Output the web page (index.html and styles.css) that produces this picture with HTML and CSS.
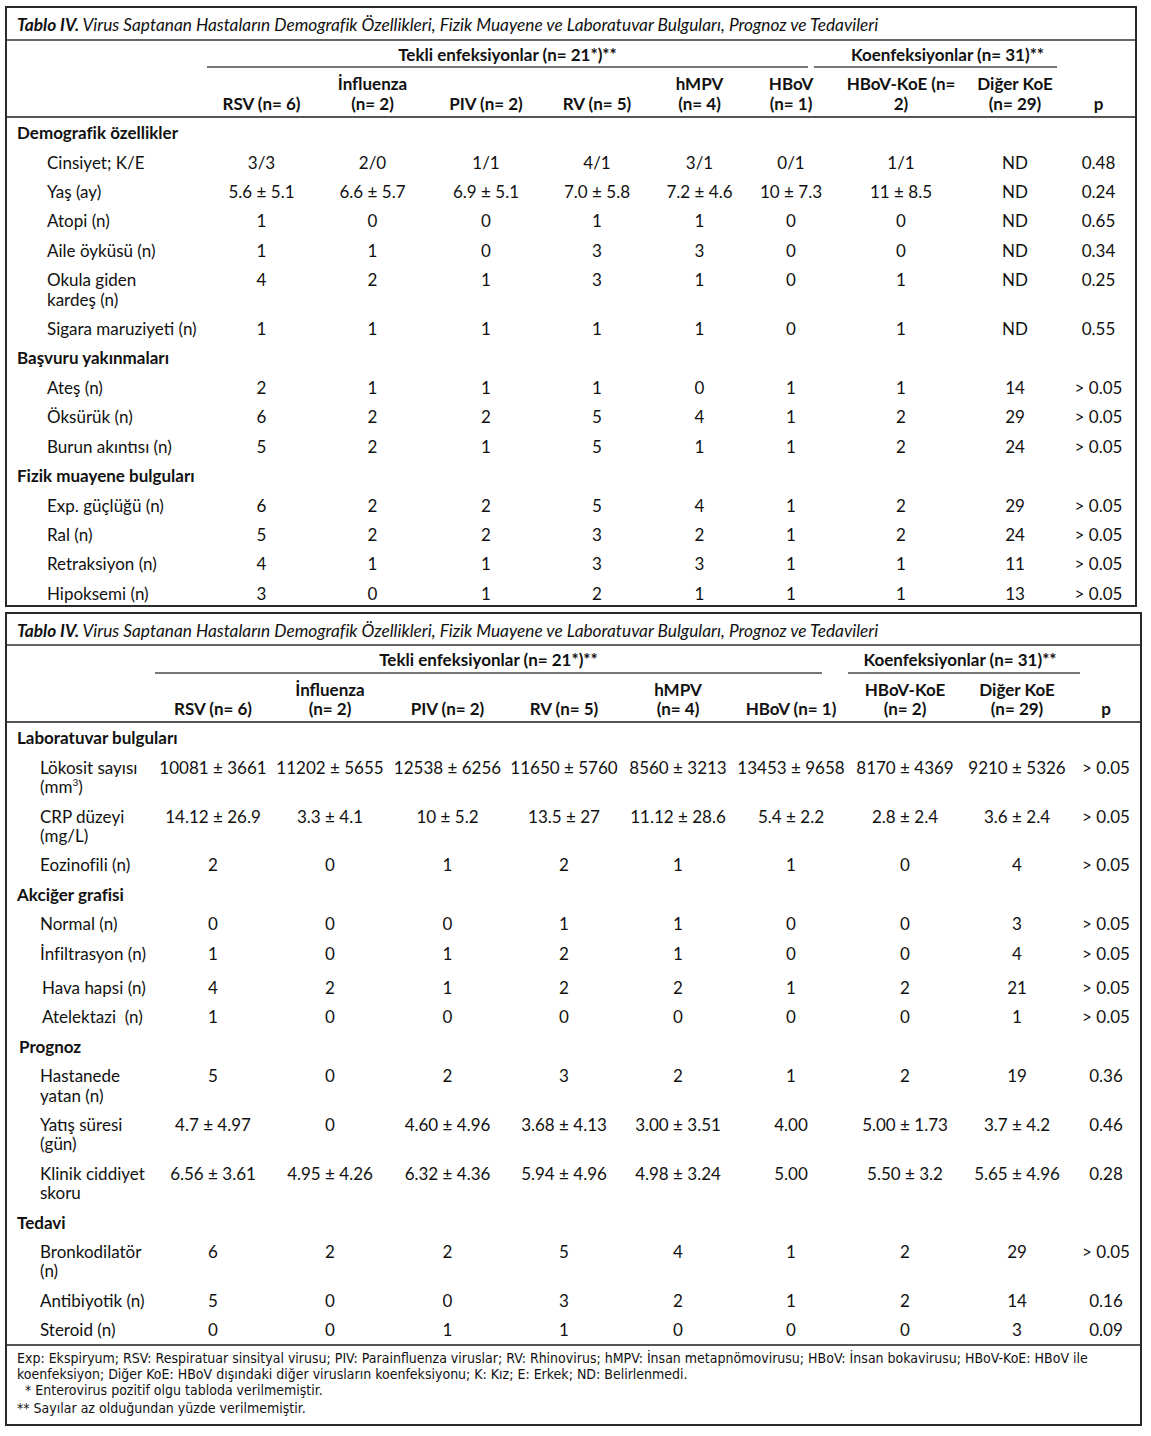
FILE: index.html
```html
<!DOCTYPE html>
<html lang="tr">
<head>
<meta charset="utf-8">
<title>Tablo IV</title>
<link rel="stylesheet" href="styles.css">
</head>
<body>
<div class="page">

<section class="box box-a">
  <div class="caption"><b>Tablo IV.</b> Virus Saptanan Hastaların Demografik Özellikleri, Fizik Muayene ve Laboratuvar Bulguları, Prognoz ve Tedavileri</div>
  <table class="tbl tbl-a">
    <colgroup>
      <col class="a-label"><col class="a-rsv"><col class="a-inf"><col class="a-piv"><col class="a-rv"><col class="a-hmpv"><col class="a-hbov"><col class="a-koe"><col class="a-diger"><col class="a-p">
    </colgroup>
    <thead>
      <tr class="grp-row">
        <th></th>
        <th colspan="6"><div class="grp grp-a-tekli">Tekli enfeksiyonlar (n= 21*)**</div></th>
        <th colspan="2"><div class="grp grp-a-koe">Koenfeksiyonlar (n= 31)**</div></th>
        <th></th>
      </tr>
      <tr class="col-row">
        <th></th>
        <th>RSV (n= 6)</th>
        <th>İnfluenza<br>(n= 2)</th>
        <th>PIV (n= 2)</th>
        <th>RV (n= 5)</th>
        <th>hMPV<br>(n= 4)</th>
        <th>HBoV<br>(n= 1)</th>
        <th>HBoV-KoE (n=<br>2)</th>
        <th>Diğer KoE<br>(n= 29)</th>
        <th>p</th>
      </tr>
    </thead>
    <tbody>
      <tr><td class="sec" colspan="10">Demografik özellikler</td></tr>
      <tr><td class="lbl">Cinsiyet; K/E</td><td>3/3</td><td>2/0</td><td>1/1</td><td>4/1</td><td>3/1</td><td>0/1</td><td>1/1</td><td>ND</td><td>0.48</td></tr>
      <tr><td class="lbl">Yaş (ay)</td><td>5.6 ± 5.1</td><td>6.6 ± 5.7</td><td>6.9 ± 5.1</td><td>7.0 ± 5.8</td><td>7.2 ± 4.6</td><td>10 ± 7.3</td><td>11 ± 8.5</td><td>ND</td><td>0.24</td></tr>
      <tr><td class="lbl">Atopi (n)</td><td>1</td><td>0</td><td>0</td><td>1</td><td>1</td><td>0</td><td>0</td><td>ND</td><td>0.65</td></tr>
      <tr><td class="lbl">Aile öyküsü (n)</td><td>1</td><td>1</td><td>0</td><td>3</td><td>3</td><td>0</td><td>0</td><td>ND</td><td>0.34</td></tr>
      <tr><td class="lbl">Okula giden<br>kardeş (n)</td><td>4</td><td>2</td><td>1</td><td>3</td><td>1</td><td>0</td><td>1</td><td>ND</td><td>0.25</td></tr>
      <tr><td class="lbl">Sigara maruziyeti (n)</td><td>1</td><td>1</td><td>1</td><td>1</td><td>1</td><td>0</td><td>1</td><td>ND</td><td>0.55</td></tr>
      <tr><td class="sec" colspan="10">Başvuru yakınmaları</td></tr>
      <tr><td class="lbl">Ateş (n)</td><td>2</td><td>1</td><td>1</td><td>1</td><td>0</td><td>1</td><td>1</td><td>14</td><td>&gt; 0.05</td></tr>
      <tr><td class="lbl">Öksürük (n)</td><td>6</td><td>2</td><td>2</td><td>5</td><td>4</td><td>1</td><td>2</td><td>29</td><td>&gt; 0.05</td></tr>
      <tr><td class="lbl">Burun akıntısı (n)</td><td>5</td><td>2</td><td>1</td><td>5</td><td>1</td><td>1</td><td>2</td><td>24</td><td>&gt; 0.05</td></tr>
      <tr><td class="sec" colspan="10">Fizik muayene bulguları</td></tr>
      <tr><td class="lbl">Exp. güçlüğü (n)</td><td>6</td><td>2</td><td>2</td><td>5</td><td>4</td><td>1</td><td>2</td><td>29</td><td>&gt; 0.05</td></tr>
      <tr><td class="lbl">Ral (n)</td><td>5</td><td>2</td><td>2</td><td>3</td><td>2</td><td>1</td><td>2</td><td>24</td><td>&gt; 0.05</td></tr>
      <tr><td class="lbl">Retraksiyon (n)</td><td>4</td><td>1</td><td>1</td><td>3</td><td>3</td><td>1</td><td>1</td><td>11</td><td>&gt; 0.05</td></tr>
      <tr class="last"><td class="lbl">Hipoksemi (n)</td><td>3</td><td>0</td><td>1</td><td>2</td><td>1</td><td>1</td><td>1</td><td>13</td><td>&gt; 0.05</td></tr>
    </tbody>
  </table>
</section>

<section class="box box-b">
  <div class="caption"><b>Tablo IV.</b> Virus Saptanan Hastaların Demografik Özellikleri, Fizik Muayene ve Laboratuvar Bulguları, Prognoz ve Tedavileri</div>
  <table class="tbl tbl-b">
    <colgroup>
      <col class="b-label"><col class="b-rsv"><col class="b-inf"><col class="b-piv"><col class="b-rv"><col class="b-hmpv"><col class="b-hbov"><col class="b-koe"><col class="b-diger"><col class="b-p">
    </colgroup>
    <thead>
      <tr class="grp-row">
        <th></th>
        <th colspan="6"><div class="grp grp-b-tekli">Tekli enfeksiyonlar (n= 21*)**</div></th>
        <th colspan="2"><div class="grp grp-b-koe">Koenfeksiyonlar (n= 31)**</div></th>
        <th></th>
      </tr>
      <tr class="col-row">
        <th></th>
        <th>RSV (n= 6)</th>
        <th>İnfluenza<br>(n= 2)</th>
        <th>PIV (n= 2)</th>
        <th>RV (n= 5)</th>
        <th>hMPV<br>(n= 4)</th>
        <th>HBoV (n= 1)</th>
        <th>HBoV-KoE<br>(n= 2)</th>
        <th>Diğer KoE<br>(n= 29)</th>
        <th>p</th>
      </tr>
    </thead>
    <tbody>
      <tr><td class="sec" colspan="10">Laboratuvar bulguları</td></tr>
      <tr><td class="lbl">Lökosit sayısı<br>(mm<sup>3</sup>)</td><td>10081 ± 3661</td><td>11202 ± 5655</td><td>12538 ± 6256</td><td>11650 ± 5760</td><td>8560 ± 3213</td><td>13453 ± 9658</td><td>8170 ± 4369</td><td>9210 ± 5326</td><td>&gt; 0.05</td></tr>
      <tr><td class="lbl">CRP düzeyi<br>(mg/L)</td><td>14.12 ± 26.9</td><td>3.3 ± 4.1</td><td>10 ± 5.2</td><td>13.5 ± 27</td><td>11.12 ± 28.6</td><td>5.4 ± 2.2</td><td>2.8 ± 2.4</td><td>3.6 ± 2.4</td><td>&gt; 0.05</td></tr>
      <tr><td class="lbl">Eozinofili (n)</td><td>2</td><td>0</td><td>1</td><td>2</td><td>1</td><td>1</td><td>0</td><td>4</td><td>&gt; 0.05</td></tr>
      <tr><td class="sec" colspan="10">Akciğer grafisi</td></tr>
      <tr><td class="lbl">Normal (n)</td><td>0</td><td>0</td><td>0</td><td>1</td><td>1</td><td>0</td><td>0</td><td>3</td><td>&gt; 0.05</td></tr>
      <tr><td class="lbl">İnfiltrasyon (n)</td><td>1</td><td>0</td><td>1</td><td>2</td><td>1</td><td>0</td><td>0</td><td>4</td><td>&gt; 0.05</td></tr>
      <tr class="tall"><td class="lbl lbl-shift">Hava hapsi (n)</td><td>4</td><td>2</td><td>1</td><td>2</td><td>2</td><td>1</td><td>2</td><td>21</td><td>&gt; 0.05</td></tr>
      <tr><td class="lbl lbl-shift">Atelektazi&nbsp; (n)</td><td>1</td><td>0</td><td>0</td><td>0</td><td>0</td><td>0</td><td>0</td><td>1</td><td>&gt; 0.05</td></tr>
      <tr><td class="sec sec-shift" colspan="10">Prognoz</td></tr>
      <tr><td class="lbl">Hastanede<br>yatan (n)</td><td>5</td><td>0</td><td>2</td><td>3</td><td>2</td><td>1</td><td>2</td><td>19</td><td>0.36</td></tr>
      <tr><td class="lbl">Yatış süresi<br>(gün)</td><td>4.7 ± 4.97</td><td>0</td><td>4.60 ± 4.96</td><td>3.68 ± 4.13</td><td>3.00 ± 3.51</td><td>4.00</td><td>5.00 ± 1.73</td><td>3.7 ± 4.2</td><td>0.46</td></tr>
      <tr><td class="lbl">Klinik ciddiyet<br>skoru</td><td>6.56 ± 3.61</td><td>4.95 ± 4.26</td><td>6.32 ± 4.36</td><td>5.94 ± 4.96</td><td>4.98 ± 3.24</td><td>5.00</td><td>5.50 ± 3.2</td><td>5.65 ± 4.96</td><td>0.28</td></tr>
      <tr><td class="sec" colspan="10">Tedavi</td></tr>
      <tr><td class="lbl">Bronkodilatör<br>(n)</td><td>6</td><td>2</td><td>2</td><td>5</td><td>4</td><td>1</td><td>2</td><td>29</td><td>&gt; 0.05</td></tr>
      <tr><td class="lbl">Antibiyotik (n)</td><td>5</td><td>0</td><td>0</td><td>3</td><td>2</td><td>1</td><td>2</td><td>14</td><td>0.16</td></tr>
      <tr class="last-ruled"><td class="lbl">Steroid (n)</td><td>0</td><td>0</td><td>1</td><td>1</td><td>0</td><td>0</td><td>0</td><td>3</td><td>0.09</td></tr>
    </tbody>
  </table>
  <div class="notes">
    <p class="note">Exp: Ekspiryum; RSV: Respiratuar sinsityal virusu; PIV: Parainfluenza viruslar; RV: Rhinovirus; hMPV: İnsan metapnömovirusu; HBoV: İnsan bokavirusu; HBoV-KoE: HBoV ile<br>koenfeksiyon; Diğer KoE: HBoV dışındaki diğer virusların koenfeksiyonu; K: Kız; E: Erkek; ND: Belirlenmedi.</p>
    <p class="note note-star">* Enterovirus pozitif olgu tabloda verilmemiştir.</p>
    <p class="note note-last">** Sayılar az olduğundan yüzde verilmemiştir.</p>
  </div>
</section>

</div>
</body>
</html>
```

FILE: styles.css
```css
html, body {
  margin: 0;
  padding: 0;
  background: #ffffff;
}

body {
  font-family: Lato, "Open Sans", "Liberation Sans", sans-serif;
  font-size: 17px;
  color: #111111;
}

.page {
  display: flex;
  flex-direction: column;
  align-items: flex-start;
  gap: 5px;
  padding: 6px 0 0 5px;
}

.box {
  box-sizing: border-box;
  border: 2px solid #2a2a2a;
}

.box-a { width: 1132px; }
.box-b { width: 1137px; }

.caption {
  padding: 7px 10px 5px;
  line-height: 19px;
  font-style: italic;
  font-size: 17.3px;
  border-bottom: 2px solid #666666;
  white-space: nowrap;
}

.caption b { font-weight: 700; }

.box-b .caption { padding-bottom: 4px; }

.tbl {
  width: 100%;
  border-collapse: collapse;
  table-layout: fixed;
}

.tbl th,
.tbl td {
  padding: 5px 0;
  line-height: 19.4px;
  text-align: center;
  vertical-align: top;
  white-space: nowrap;
}

.tbl th { font-weight: 700; }

.grp-row th {
  padding: 4px 0 0;
  vertical-align: bottom;
}

.grp {
  padding-bottom: 2px;
  border-bottom: 2px solid #777777;
}

.grp-a-tekli { margin-right: 26px; }
.grp-a-koe { margin-left: -20px; margin-right: 5px; padding-left: 24px; }
.grp-b-tekli { margin-right: 26px; }
.grp-b-koe { margin-right: -8px; padding-right: 8px; }

.col-row th {
  padding: 6px 0 3px;
  vertical-align: bottom;
  border-bottom: 2px solid #555555;
}

.tbl td.sec {
  text-align: left;
  font-weight: 700;
  padding-left: 10px;
}

.tbl td.sec-shift { padding-left: 12px; }

.tbl td.lbl {
  text-align: left;
  padding-left: 40px;
}

.tbl-b td.lbl { padding-left: 33px; }
.tbl-b td.lbl-shift { padding-left: 35px; }

.tbl tr.tall td { padding-top: 10px; }

.tbl tr.last td { padding-bottom: 2px; }

.tbl tr.last-ruled td {
  border-bottom: 2px solid #555555;
  padding-bottom: 4px;
}

sup {
  font-size: 10px;
  line-height: 0;
  vertical-align: 7px;
}

/* column widths, box A */
.a-label { width: 200px; }
.a-rsv { width: 109px; }
.a-inf { width: 113px; }
.a-piv { width: 114px; }
.a-rv { width: 108px; }
.a-hmpv { width: 97px; }
.a-hbov { width: 86px; }
.a-koe { width: 134px; }
.a-diger { width: 94px; }
.a-p { width: 73px; }

/* column widths, box B */
.b-label { width: 148px; }
.b-rsv { width: 116px; }
.b-inf { width: 118px; }
.b-piv { width: 117px; }
.b-rv { width: 116px; }
.b-hmpv { width: 112px; }
.b-hbov { width: 114px; }
.b-koe { width: 114px; }
.b-diger { width: 110px; }
.b-p { width: 68px; }

.notes {
  padding: 4px 10px 8px;
  font-family: "Liberation Sans Narrow", "DejaVu Sans Condensed", "Liberation Sans", sans-serif;
  font-size: 14px;
  color: #111111;
}

.note {
  margin: 0;
  line-height: 16px;
  white-space: nowrap;
}

.note-star { padding-left: 8px; }
.note-last { margin-top: 2px; }
```
